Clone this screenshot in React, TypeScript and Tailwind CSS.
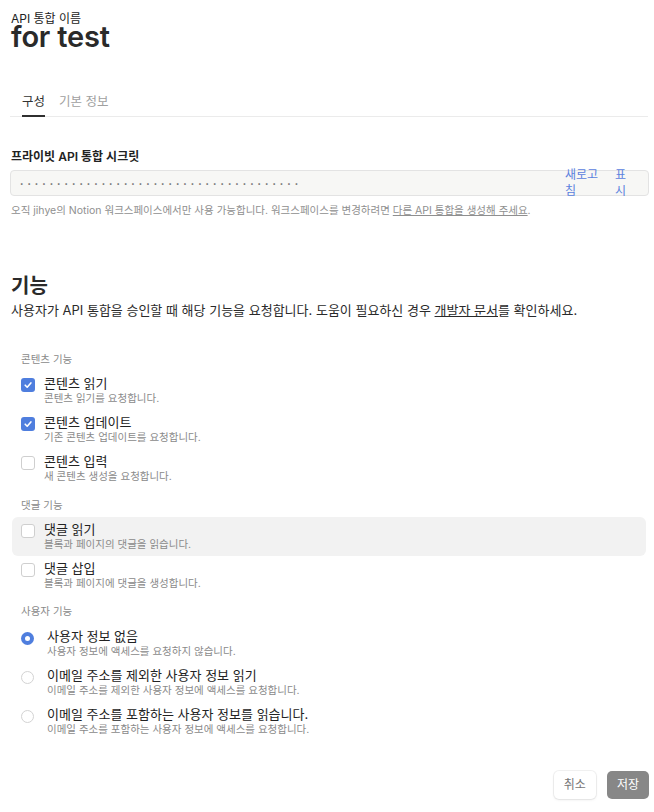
import React from "react";

const font = { fontFamily: '"Inter", "Noto Sans CJK KR", sans-serif' };

function Check({ checked }: { checked: boolean }) {
  return checked ? (
    <div className="w-[14px] h-[14px] rounded-[3px] bg-[#4f7ede] flex items-center justify-center shrink-0">
      <svg width="10" height="10" viewBox="0 0 10 10" fill="none">
        <path d="M2.2 5.2 L4.2 7.2 L7.9 2.9" stroke="white" strokeWidth="1.6" strokeLinecap="round" strokeLinejoin="round" />
      </svg>
    </div>
  ) : (
    <div className="w-[14px] h-[14px] rounded-[3px] border border-[#cfcfcf] bg-white shrink-0" />
  );
}

function Radio({ checked }: { checked: boolean }) {
  return checked ? (
    <div className="w-[13px] h-[13px] rounded-full bg-[#4f7ede] flex items-center justify-center shrink-0">
      <div className="w-[5px] h-[5px] rounded-full bg-white" />
    </div>
  ) : (
    <div className="w-[13px] h-[13px] rounded-full border border-[#d3d3d3] bg-white shrink-0" />
  );
}

function CheckItem({ checked, label, desc, hover }: { checked: boolean; label: string; desc: string; hover?: boolean }) {
  return (
    <div className={`flex items-start gap-[9px] px-[9px] py-[4px] rounded-[6px] ${hover ? "bg-[#f2f2f2]" : ""}`}>
      <div className="pt-[3px]"><Check checked={checked} /></div>
      <div className="flex flex-col">
        <div className="text-[13px] leading-[17px] text-[#222]">{label}</div>
        <div className="text-[10.5px] leading-[14px] text-[#8a8a8a]">{desc}</div>
      </div>
    </div>
  );
}

function RadioItem({ checked, label, desc }: { checked: boolean; label: string; desc: string }) {
  return (
    <div className="flex items-start gap-[13px] px-[9px] py-[4px]">
      <div className="pt-[4px]"><Radio checked={checked} /></div>
      <div className="flex flex-col">
        <div className="text-[13px] leading-[17px] text-[#222]">{label}</div>
        <div className="text-[10.5px] leading-[14px] text-[#8a8a8a]">{desc}</div>
      </div>
    </div>
  );
}

export default function App() {
  const dots = "•".repeat(38);
  return (
    <div className="w-[654px] h-[812px] bg-white relative" style={font}>
      <div className="pl-[11px] pr-[5px] pt-[12px]">
        <div className="text-[12px] leading-[14px] text-[#222]">API 통합 이름</div>
        <div className="text-[29px] leading-[23px] font-semibold text-[#2a2a2a] tracking-[-0.2px] -mt-[1px]">for test</div>

        <div className="mt-[46px] border-b border-[#ebebeb] flex gap-[14px] pl-[12px] w-[638px] -ml-[1px]">
          <div className="text-[12.5px] leading-[16px] text-[#333] pb-[5px] border-b-2 border-[#2f2f2f] -mb-px">구성</div>
          <div className="text-[12.5px] leading-[16px] text-[#a0a0a0] pb-[5px]">기본 정보</div>
        </div>

        <div className="mt-[32px] text-[12px] leading-[16px] font-semibold text-[#222]">프라이빗 API 통합 시크릿</div>
        <div className="mt-[5px] w-[639px] -ml-[1px] h-[26px] rounded-[4px] border border-[#e3e3e3] bg-[#f7f7f5] flex items-center pl-[9px] pr-[19px]">
          <div className="flex-1 text-[6px] tracking-[4.05px] text-[#6b6b6b] leading-[10px] pt-[2px]">{dots}</div>
          <div className="flex items-center gap-[12px] text-[12px] leading-[16px] text-[#5b82de]">
            <div className="w-[38px] break-all">새로고침</div>
            <div className="w-[14px] break-all">표시</div>
          </div>
        </div>
        <div className="mt-[8px] text-[10.5px] leading-[14px] text-[#8f8f8f]">
          오직 jihye의 Notion 워크스페이스에서만 사용 가능합니다. 워크스페이스를 변경하려면 <span className="underline">다른 API 통합을 생성해 주세요</span>.
        </div>

        <div className="mt-[55px] text-[20px] leading-[26px] font-bold text-[#2a2a2a]">기능</div>
        <div className="mt-[1px] text-[13px] leading-[20px] text-[#2a2a2a]">
          사용자가 API 통합을 승인할 때 해당 기능을 요청합니다. 도움이 필요하신 경우 <span className="underline">개발자 문서</span>를 확인하세요.
        </div>

        <div className="mt-[33px] flex flex-col pl-[1px] pr-[3px]">
          <div className="pl-[9px] text-[10.5px] leading-[14px] text-[#8a8a8a] mb-[4px]">콘텐츠 기능</div>
          <div className="flex flex-col">
            <CheckItem checked label="콘텐츠 읽기" desc="콘텐츠 읽기를 요청합니다." />
            <CheckItem checked label="콘텐츠 업데이트" desc="기존 콘텐츠 업데이트를 요청합니다." />
            <CheckItem checked={false} label="콘텐츠 입력" desc="새 콘텐츠 생성을 요청합니다." />
          </div>

          <div className="pl-[9px] mt-[11px] text-[10.5px] leading-[14px] text-[#8a8a8a] mb-[4px]">댓글 기능</div>
          <div className="flex flex-col">
            <CheckItem checked={false} hover label="댓글 읽기" desc="블록과 페이지의 댓글을 읽습니다." />
            <CheckItem checked={false} label="댓글 삽입" desc="블록과 페이지에 댓글을 생성합니다." />
          </div>

          <div className="pl-[9px] mt-[10px] text-[10.5px] leading-[14px] text-[#8a8a8a] mb-[5px]">사용자 기능</div>
          <div className="flex flex-col">
            <RadioItem checked label="사용자 정보 없음" desc="사용자 정보에 액세스를 요청하지 않습니다." />
            <RadioItem checked={false} label="이메일 주소를 제외한 사용자 정보 읽기" desc="이메일 주소를 제외한 사용자 정보에 액세스를 요청합니다." />
            <RadioItem checked={false} label="이메일 주소를 포함하는 사용자 정보를 읽습니다." desc="이메일 주소를 포함하는 사용자 정보에 액세스를 요청합니다." />
          </div>
        </div>

        <div className="mt-[30px] flex justify-end gap-[11px]">
          <div className="h-[28px] px-[10px] rounded-[5px] bg-white shadow-[0_0_0_1px_rgba(0,0,0,0.05),0_1px_3px_rgba(0,0,0,0.08)] flex items-center text-[12px] text-[#777]">취소</div>
          <div className="h-[28px] px-[10px] rounded-[5px] bg-[#878787] flex items-center text-[12px] text-white">저장</div>
        </div>
      </div>
    </div>
  );
}
